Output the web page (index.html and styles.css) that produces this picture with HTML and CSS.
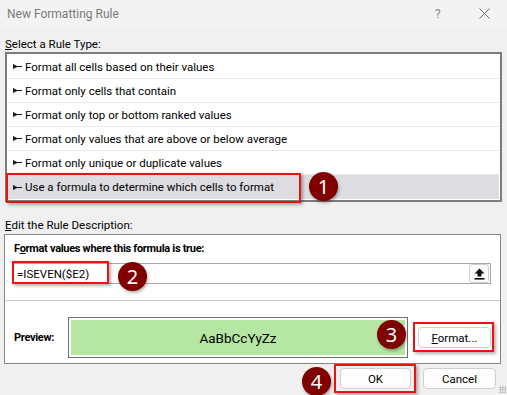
FILE: index.html
```html
<!DOCTYPE html>
<html lang="en">
<head>
  <meta charset="UTF-8">
  <title>New Formatting Rule</title>
  <link rel="stylesheet" href="styles.css">
</head>
<body>
<div class="dialog">
  <div class="titlebar">
    <span class="title">New Formatting Rule</span>
    <span class="help">?</span>
    <svg class="close" width="11" height="11" viewBox="0 0 11 11"><path d="M0.5 0.5 L10.5 10.5 M10.5 0.5 L0.5 10.5" stroke="#6b6b6b" stroke-width="1"/></svg>
  </div>

  <div class="label"><u>S</u>elect a Rule Type:</div>
  <div class="rule-list">
    <div class="rule"><svg class="arrow" width="9" height="7" viewBox="0 0 9 7"><path d="M0 1 L4 3 L9 3 L9 4 L4 4 L0 6 Z" fill="#1a1a1a"/></svg>Format all cells based on their values</div>
    <div class="rule"><svg class="arrow" width="9" height="7" viewBox="0 0 9 7"><path d="M0 1 L4 3 L9 3 L9 4 L4 4 L0 6 Z" fill="#1a1a1a"/></svg>Format only cells that contain</div>
    <div class="rule"><svg class="arrow" width="9" height="7" viewBox="0 0 9 7"><path d="M0 1 L4 3 L9 3 L9 4 L4 4 L0 6 Z" fill="#1a1a1a"/></svg>Format only top or bottom ranked values</div>
    <div class="rule"><svg class="arrow" width="9" height="7" viewBox="0 0 9 7"><path d="M0 1 L4 3 L9 3 L9 4 L4 4 L0 6 Z" fill="#1a1a1a"/></svg>Format only values that are above or below average</div>
    <div class="rule"><svg class="arrow" width="9" height="7" viewBox="0 0 9 7"><path d="M0 1 L4 3 L9 3 L9 4 L4 4 L0 6 Z" fill="#1a1a1a"/></svg>Format only unique or duplicate values</div>
    <div class="rule selected"><svg class="arrow" width="9" height="7" viewBox="0 0 9 7"><path d="M0 1 L4 3 L9 3 L9 4 L4 4 L0 6 Z" fill="#1a1a1a"/></svg>Use a formula to determine which cells to format</div>
  </div>

  <div class="label label-edit"><u>E</u>dit the Rule Description:</div>
  <div class="desc-box">
    <div class="bold-label">F<u>o</u>rmat values where this formula is true:</div>
    <div class="formula">
      <span class="formula-text">=ISEVEN($E2)</span>
      <span class="collapse-btn">
        <svg width="11" height="12" viewBox="0 0 11 12"><path d="M5.5 0.5 L10.5 5.5 L7.5 5.5 L7.5 8.5 L3.5 8.5 L3.5 5.5 L0.5 5.5 Z" fill="#111"/><rect x="0.5" y="10" width="10" height="1.6" fill="#111"/></svg>
      </span>
    </div>
    <div class="separator"></div>
    <div class="preview-row">
      <span class="bold-label preview-label">Preview:</span>
      <div class="preview"><div class="preview-fill">AaBbCcYyZz</div></div>
      <button class="btn format-btn"><u>F</u>ormat...</button>
    </div>
  </div>

  <div class="actions">
    <button class="btn ok-btn">OK</button>
    <button class="btn cancel-btn">Cancel</button>
  </div>

  <div class="grip"></div>

  <!-- annotations -->
  <div class="mark mark-1"></div>
  <div class="mark mark-2"></div>
  <div class="mark mark-3"></div>
  <div class="mark mark-4"></div>
  <div class="step step-1">1</div>
  <div class="step step-2">2</div>
  <div class="step step-3">3</div>
  <div class="step step-4">4</div>
</div>
</body>
</html>
```

FILE: styles.css
```css
* {
  box-sizing: border-box;
  margin: 0;
  padding: 0;
}

body {
  font-family: Roboto, 'Noto Sans', sans-serif;
  font-size: 11.5px;
  color: #000;
  background: #f0f0f0;
}

.dialog {
  position: relative;
  width: 507px;
  height: 395px;
  overflow: hidden;
  background: #f0f0f0;
}

/* title bar */
.titlebar {
  height: 27px;
  background: #f3f3f3;
  display: flex;
  align-items: center;
  padding-left: 7px;
  color: #7a7a7a;
  font-size: 12px;
}

.titlebar .title {
  flex: 1;
}

.titlebar .help {
  width: 12px;
  margin-right: 32px;
  color: #8a8a8a;
}

.titlebar .close {
  margin-right: 17px;
}

/* section labels */
.label {
  height: 16px;
  line-height: 16px;
  margin-top: 9px;
  padding-left: 5px;
}

.label-edit {
  margin-top: 15px;
  margin-bottom: 1px;
}

/* rule type list */
.rule-list {
  margin: 0 5px;
  border: 2px solid #7d7d7d;
  background: #fff;
  padding: 1px 1px 1px 0;
}

.rule {
  height: 24px;
  display: flex;
  align-items: center;
  gap: 3px;
  padding-left: 6px;
  border-bottom: 1px solid #e8e8e8;
}

.rule .arrow {
  flex: none;
}

.rule.selected {
  background: #dcdce1;
  border-bottom: none;
}

/* rule description */
.desc-box {
  margin: 0 6px 0 4px;
  border: 1px solid #858585;
  background: #fff;
  padding: 6px 0 5px;
}

.bold-label {
  font-weight: 700;
  font-size: 11px;
  letter-spacing: -0.3px;
  height: 16px;
  line-height: 16px;
  padding-left: 9px;
}

.formula {
  margin: 6px 9px 0 8px;
  height: 21px;
  border: 1px solid #a8a8a8;
  display: flex;
  align-items: center;
  justify-content: space-between;
  padding-left: 3px;
}

.collapse-btn {
  width: 20px;
  height: 19px;
  border: 1px solid #cfcfcf;
  border-radius: 3px;
  background: #fcfcfc;
  display: flex;
  align-items: center;
  justify-content: center;
  margin-right: 1px;
}

.separator {
  height: 1px;
  background: #cacaca;
  margin-top: 16px;
}

.preview-row {
  margin-top: 16px;
  display: flex;
  align-items: center;
}

.preview-label {
  width: 63px;
}

.preview {
  width: 340px;
  height: 41px;
  border: 1px solid #6e6e6e;
  padding: 2px;
  background: #fff;
}

.preview-fill {
  height: 100%;
  background: #b5e6a3;
  display: flex;
  align-items: center;
  justify-content: center;
  font-size: 13.5px;
}

/* buttons */
.btn {
  font-family: inherit;
  font-size: 11.5px;
  color: #000;
  background: #fdfdfd;
  border: 1px solid #d0d0d0;
  border-radius: 4px;
  height: 21px;
}

.format-btn {
  width: 73px;
  margin-left: 10px;
}

.actions {
  display: flex;
  justify-content: flex-end;
  gap: 12px;
  padding-right: 11px;
  margin-top: 4px;
}

.ok-btn {
  width: 71px;
}

.cancel-btn {
  width: 73px;
}

.grip {
  position: absolute;
  right: 1px;
  bottom: 2px;
  width: 7px;
  height: 7px;
  background-image: radial-gradient(circle, #b0b0b0 0.8px, transparent 1px);
  background-size: 2.5px 2.5px;
}

/* annotations */
.mark {
  position: absolute;
  border: 2px solid #ee1111;
  box-shadow: 2px 2px 3px rgba(0, 0, 0, 0.3);
}

.mark-1 { left: 6px; top: 173px; width: 295px; height: 30px; }
.mark-2 { left: 12px; top: 261px; width: 97px; height: 23px; }
.mark-3 { left: 413px; top: 322px; width: 81px; height: 30px; }
.mark-4 { left: 334px; top: 364px; width: 82px; height: 29px; }

.step {
  position: absolute;
  width: 29px;
  height: 29px;
  border-radius: 50%;
  background: #800000;
  color: #fff;
  font-family: 'Noto Sans', sans-serif;
  font-size: 20px;
  line-height: 29px;
  text-align: center;
  box-shadow: 1px 2px 3px rgba(0, 0, 0, 0.3);
}

.step-1 { left: 309px; top: 172px; }
.step-2 { left: 118px; top: 262px; }
.step-3 { left: 377px; top: 320px; }
.step-4 { left: 302px; top: 367px; }
```
